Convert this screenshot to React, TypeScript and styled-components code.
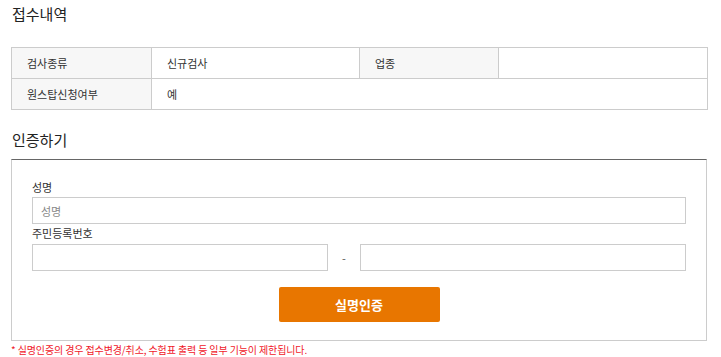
import styled, { createGlobalStyle } from "styled-components";

const Global = createGlobalStyle`
  body {
    margin: 0;
    background: #fff;
    font-family: "Noto Sans CJK KR", "Noto Sans", sans-serif;
    color: #333;
  }
  * { box-sizing: border-box; }
`;

const Page = styled.div`
  padding: 3px 14px 0 11px;
  width: 721px;
`;

const Title = styled.h3<{ $top?: number }>`
  margin: ${(p) => p.$top ?? 0}px 0 0 1px;
  font-size: 15px;
  font-weight: 400;
  line-height: 22px;
  color: #222;
`;

const InfoTable = styled.table`
  margin-top: 22px;
  width: 696px;
  border-collapse: collapse;
  table-layout: fixed;
  font-size: 11px;

  th,
  td {
    height: 31px;
    border: 1px solid #ccc;
    padding: 0 15px;
    text-align: left;
    font-weight: 400;
    color: #333;
  }
  th {
    background: #f7f7f7;
  }
`;

const AuthBox = styled.div`
  margin-top: 8px;
  border: 1px solid #ccc;
  border-top: 1px solid #666;
  padding: 19px 20px 18px 20px;
`;

const Label = styled.label<{ $top?: number }>`
  display: block;
  margin-top: ${(p) => p.$top ?? 0}px;
  font-size: 11px;
  line-height: 16px;
  color: #333;
`;

const Input = styled.input`
  display: block;
  width: 100%;
  height: 27px;
  margin-top: 2px;
  border: 1px solid #ccc;
  padding: 0 8px;
  font-family: inherit;
  font-size: 11px;
  color: #333;
  outline: none;
  &::placeholder {
    color: #888;
  }
`;

const IdRow = styled.div`
  display: grid;
  grid-template-columns: 296px 32px 1fr;
  align-items: center;
  margin-top: 3px;

  ${Input} {
    margin-top: 0;
  }
`;

const Dash = styled.span`
  text-align: center;
  font-size: 11px;
  color: #555;
`;

const Actions = styled.div`
  display: flex;
  justify-content: center;
  margin-top: 16px;
`;

const SubmitButton = styled.button`
  width: 161px;
  height: 35px;
  border: 0;
  border-radius: 2px;
  background: #e87600;
  color: #fff;
  font-family: inherit;
  font-size: 13px;
  font-weight: 700;
  cursor: pointer;
`;

const Notice = styled.p`
  margin: 1px 0 0 0;
  font-size: 10px;
  line-height: 16px;
  letter-spacing: -0.12px;
  color: #f0182a;
`;

export default function App() {
  return (
    <>
      <Global />
      <Page>
        <Title>접수내역</Title>
        <InfoTable>
          <colgroup>
            <col style={{ width: 140 }} />
            <col style={{ width: 208 }} />
            <col style={{ width: 139 }} />
            <col style={{ width: 209 }} />
          </colgroup>
          <tbody>
            <tr>
              <th>검사종류</th>
              <td>신규검사</td>
              <th>업종</th>
              <td></td>
            </tr>
            <tr>
              <th>원스탑신청여부</th>
              <td colSpan={3}>예</td>
            </tr>
          </tbody>
        </InfoTable>

        <Title $top={19}>인증하기</Title>
        <AuthBox>
          <Label>성명</Label>
          <Input placeholder="성명" />
          <Label $top={1}>주민등록번호</Label>
          <IdRow>
            <Input />
            <Dash>-</Dash>
            <Input />
          </IdRow>
          <Actions>
            <SubmitButton type="button">실명인증</SubmitButton>
          </Actions>
        </AuthBox>
        <Notice>* 실명인증의 경우 접수변경/취소, 수험표 출력 등 일부 기능이 제한됩니다.</Notice>
      </Page>
    </>
  );
}
